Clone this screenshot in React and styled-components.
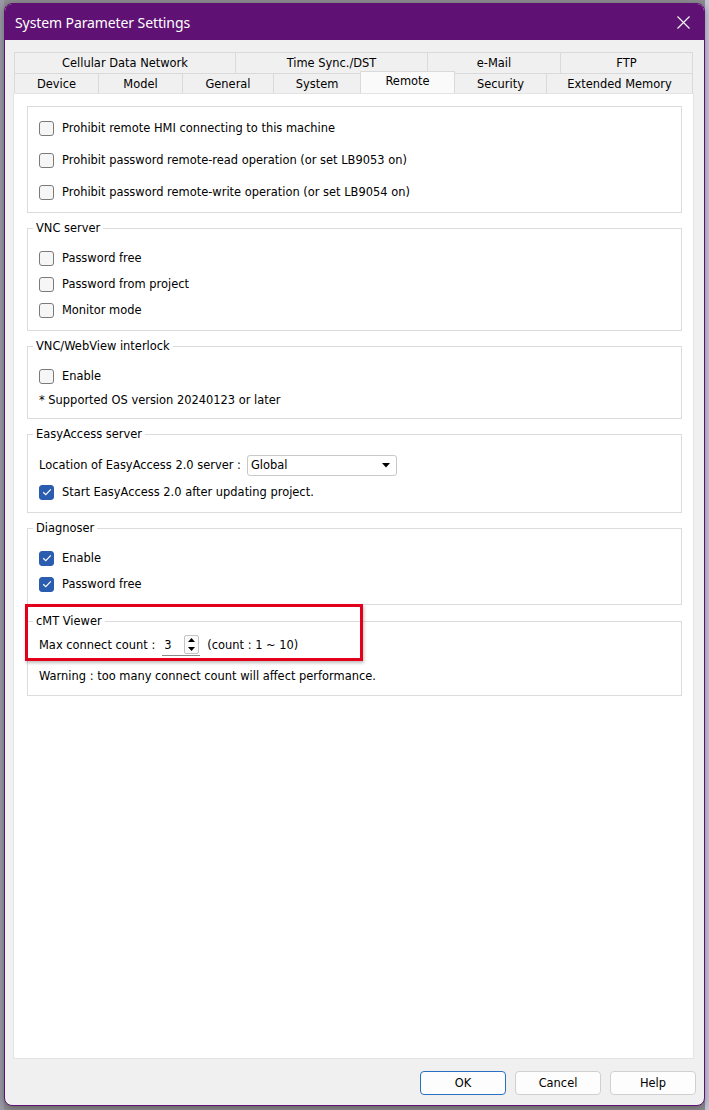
import React from 'react';
import styled, { createGlobalStyle } from 'styled-components';

const Global = createGlobalStyle`
  html, body { margin: 0; padding: 0; }
  body {
    background: #8f8f93;
    font-family: "DejaVu Sans", Verdana, sans-serif;
    -webkit-font-smoothing: antialiased;
  }
`;

const FS = '11.45px';

const Screen = styled.div`
  width: 709px;
  height: 1110px;
  box-sizing: border-box;
  padding: 3px 4px 4px 4px;
  overflow: hidden;
  background: linear-gradient(to right, #9b9ba6 0, #9b9ba6 4px, #8f8f93 4px, #8f8f93 705px, #c9c7dc 705px);
`;

const Dialog = styled.div`
  width: 701px;
  height: 1103px;
  box-sizing: border-box;
  border: 1px solid #5f1273;
  border-radius: 8px;
  background: #f0f0f0;
  display: flex;
  flex-direction: column;
  overflow: hidden;
  box-shadow: 0 2px 8px rgba(0, 0, 0, 0.35);
`;

const TitleBar = styled.div`
  height: 36px;
  flex: none;
  background: #5f1273;
  display: flex;
  align-items: center;
  justify-content: space-between;
  padding: 0 14px 0 10px;
`;

const Title = styled.div`
  color: #fff;
  font-family: "Noto Sans", "Open Sans", sans-serif;
  font-size: 14px;
  letter-spacing: -0.1px;
`;

const CloseBtn = styled.div`
  width: 14px;
  height: 14px;
  display: flex;
  align-items: center;
  justify-content: center;
`;

const Content = styled.div`
  flex: 1;
  display: flex;
  flex-direction: column;
  padding: 12px 10px 0 8px;
  min-height: 0;
`;

const Tabs = styled.div`
  display: flex;
  flex-direction: column;
  margin-left: 1px;
  flex: none;
`;

const TabRow = styled.div`
  display: flex;
  height: ${(p) => p.$h}px;
  align-items: flex-end;
`;

const Tab = styled.div`
  box-sizing: border-box;
  width: ${(p) => p.$w}px;
  height: ${(p) => (p.$active ? p.$h + 2 : p.$h)}px;
  margin-top: ${(p) => (p.$active ? -2 : 0)}px;
  border-top: 1px solid #dadada;
  border-left: ${(p) => (p.$noLeft ? 'none' : '1px solid #dadada')};
  border-right: ${(p) => (p.$last || p.$active ? '1px solid #dadada' : 'none')};
  background: ${(p) => (p.$active ? '#fafafa' : '#f0f0f0')};
  display: flex;
  align-items: center;
  justify-content: center;
  padding-bottom: ${(p) => (p.$active ? 3 : 0)}px;
  font-size: ${FS};
  color: #000;
  position: relative;
  z-index: ${(p) => (p.$active ? 1 : 0)};
`;

const Panel = styled.div`
  flex: 1;
  background: #fff;
  border: 1px solid #e4e4e4;
  padding: 12px 11px 0 13px;
  display: flex;
  flex-direction: column;
`;

const Group = styled.div`
  position: relative;
  border: 1px solid #dcdcdc;
  margin-top: ${(p) => p.$mt || 0}px;
  padding: ${(p) => p.$pt}px 11px ${(p) => p.$pb}px 11px;
  display: flex;
  flex-direction: column;
  gap: ${(p) => p.$gap || 0}px;
`;

const Legend = styled.div`
  position: absolute;
  top: -9px;
  left: 5px;
  padding: 0 3px;
  background: #fff;
  line-height: 16px;
  font-size: ${FS};
  color: #000;
`;

const Row = styled.div`
  height: ${(p) => p.$h}px;
  display: flex;
  align-items: center;
  gap: ${(p) => p.$gap ?? 8}px;
  font-size: ${FS};
  color: #000;
  white-space: nowrap;
`;

const Box = styled.div`
  box-sizing: border-box;
  width: 15px;
  height: 15px;
  border-radius: 3px;
  border: 1px solid ${(p) => (p.$checked ? '#2a5caf' : '#7a7a7a')};
  background: ${(p) => (p.$checked ? '#2a5caf' : '#f6f6f6')};
  display: flex;
  align-items: center;
  justify-content: center;
  flex: none;
`;

const Select = styled.div`
  box-sizing: border-box;
  width: 150px;
  height: 21px;
  border: 1px solid #c9c9c9;
  border-radius: 3px;
  background: #fff;
  display: flex;
  align-items: center;
  justify-content: space-between;
  padding: 0 6px 0 3px;
  font-size: ${FS};
`;

const Spin = styled.div`
  box-sizing: border-box;
  width: 38px;
  height: 21px;
  border-bottom: 1px solid #8a8a8a;
  display: flex;
  align-items: center;
  justify-content: space-between;
  padding: 0 1px 0 2px;
  font-size: ${FS};
`;

const SpinBtns = styled.div`
  box-sizing: border-box;
  width: 15px;
  height: 19px;
  border: 1px solid #c4c4c4;
  border-radius: 2px;
  background: #fbfbfb;
  display: flex;
  flex-direction: column;
`;

const SpinHalf = styled.div`
  flex: 1;
  display: flex;
  align-items: center;
  justify-content: center;
`;

const Highlight = styled.div`
  position: absolute;
  left: -3px;
  top: -18px;
  width: 338px;
  height: 57px;
  box-sizing: border-box;
  border: 3px solid #e3001b;
  box-shadow: 1px 2px 3px rgba(0, 0, 0, 0.25);
  pointer-events: none;
`;

const Footer = styled.div`
  flex: none;
  display: flex;
  justify-content: flex-end;
  gap: 9px;
  padding: 12px 8px 10px 0;
`;

const Button = styled.div`
  box-sizing: border-box;
  width: 86px;
  height: 24px;
  border-radius: 4px;
  border: 1px solid ${(p) => (p.$primary ? '#2a6fc0' : '#d0d0d0')};
  background: #fdfdfd;
  display: flex;
  align-items: center;
  justify-content: center;
  font-size: ${FS};
  color: #000;
`;

const Check = ({ checked }) => (
  <Box $checked={checked}>
    {checked && (
      <svg width="10" height="8" viewBox="0 0 10 8">
        <polyline points="1.2,4.2 3.8,6.6 8.8,1.4" fill="none" stroke="#fff" strokeWidth="1.2" />
      </svg>
    )}
  </Box>
);

const CheckRow = ({ h, checked, children }) => (
  <Row $h={h}>
    <Check checked={checked} />
    <span>{children}</span>
  </Row>
);

const ROW1 = [
  ['Cellular Data Network', 221],
  ['Time Sync./DST', 192],
  ['e-Mail', 133],
  ['FTP', 133],
];
const ROW2 = [
  ['Device', 84],
  ['Model', 84],
  ['General', 91],
  ['System', 87],
  ['Remote', 95],
  ['Security', 91],
  ['Extended Memory', 147],
];

export default function App() {
  return (
    <>
      <Global />
      <Screen>
        <Dialog>
          <TitleBar>
            <Title>System Parameter Settings</Title>
            <CloseBtn>
              <svg width="13" height="13" viewBox="0 0 13 13">
                <path d="M0.5 0.5 L12.5 12.5 M12.5 0.5 L0.5 12.5" stroke="#fff" strokeWidth="1.1" />
              </svg>
            </CloseBtn>
          </TitleBar>
          <Content>
            <Tabs>
              <TabRow $h={21}>
                {ROW1.map(([t, w], i) => (
                  <Tab key={t} $w={w} $h={21} $last={i === ROW1.length - 1}>
                    {t}
                  </Tab>
                ))}
              </TabRow>
              <TabRow $h={20}>
                {ROW2.map(([t, w], i) => (
                  <Tab
                    key={t}
                    $w={w}
                    $h={20}
                    $active={t === 'Remote'}
                    $noLeft={t === 'Security'}
                    $last={i === ROW2.length - 1}
                  >
                    {t}
                  </Tab>
                ))}
              </TabRow>
            </Tabs>
            <Panel>
              <Group $pt={5} $pb={4}>
                <CheckRow h={32}>Prohibit remote HMI connecting to this machine</CheckRow>
                <CheckRow h={32}>Prohibit password remote-read operation (or set LB9053 on)</CheckRow>
                <CheckRow h={32}>Prohibit password remote-write operation (or set LB9054 on)</CheckRow>
              </Group>

              <Group $mt={15} $pt={16} $pb={7}>
                <Legend>VNC server</Legend>
                <CheckRow h={26}>Password free</CheckRow>
                <CheckRow h={26}>Password from project</CheckRow>
                <CheckRow h={26}>Monitor mode</CheckRow>
              </Group>

              <Group $mt={15} $pt={17} $pb={6}>
                <Legend>VNC/WebView interlock</Legend>
                <CheckRow h={24}>Enable</CheckRow>
                <Row $h={24}>* Supported OS version 20240123 or later</Row>
              </Group>

              <Group $mt={15} $pt={17} $pb={6}>
                <Legend>EasyAccess server</Legend>
                <Row $h={26} $gap={6}>
                  <span>Location of EasyAccess 2.0 server :</span>
                  <Select>
                    <span>Global</span>
                    <svg width="8" height="5" viewBox="0 0 8 5">
                      <polygon points="0,0 8,0 4,4.5" fill="#000" />
                    </svg>
                  </Select>
                </Row>
                <CheckRow h={28} checked>
                  Start EasyAccess 2.0 after updating project.
                </CheckRow>
              </Group>

              <Group $mt={15} $pt={16} $pb={7}>
                <Legend>Diagnoser</Legend>
                <CheckRow h={26} checked>Enable</CheckRow>
                <CheckRow h={26} checked>Password free</CheckRow>
              </Group>

              <Group $mt={16} $pt={10} $pb={6} $gap={5}>
                <Legend>cMT Viewer</Legend>
                <Row $h={26} $gap={7}>
                  <span>Max connect count :</span>
                  <Spin>
                    <span>3</span>
                    <SpinBtns>
                      <SpinHalf>
                        <svg width="7" height="4" viewBox="0 0 7 4">
                          <polygon points="0,4 7,4 3.5,0" fill="#000" />
                        </svg>
                      </SpinHalf>
                      <SpinHalf>
                        <svg width="7" height="4" viewBox="0 0 7 4">
                          <polygon points="0,0 7,0 3.5,4" fill="#000" />
                        </svg>
                      </SpinHalf>
                    </SpinBtns>
                  </Spin>
                  <span>(count : 1 ~ 10)</span>
                </Row>
                <Row $h={26}>Warning : too many connect count will affect performance.</Row>
                <Highlight />
              </Group>
            </Panel>
          </Content>
          <Footer>
            <Button $primary>OK</Button>
            <Button>Cancel</Button>
            <Button>Help</Button>
          </Footer>
        </Dialog>
      </Screen>
    </>
  );
}
